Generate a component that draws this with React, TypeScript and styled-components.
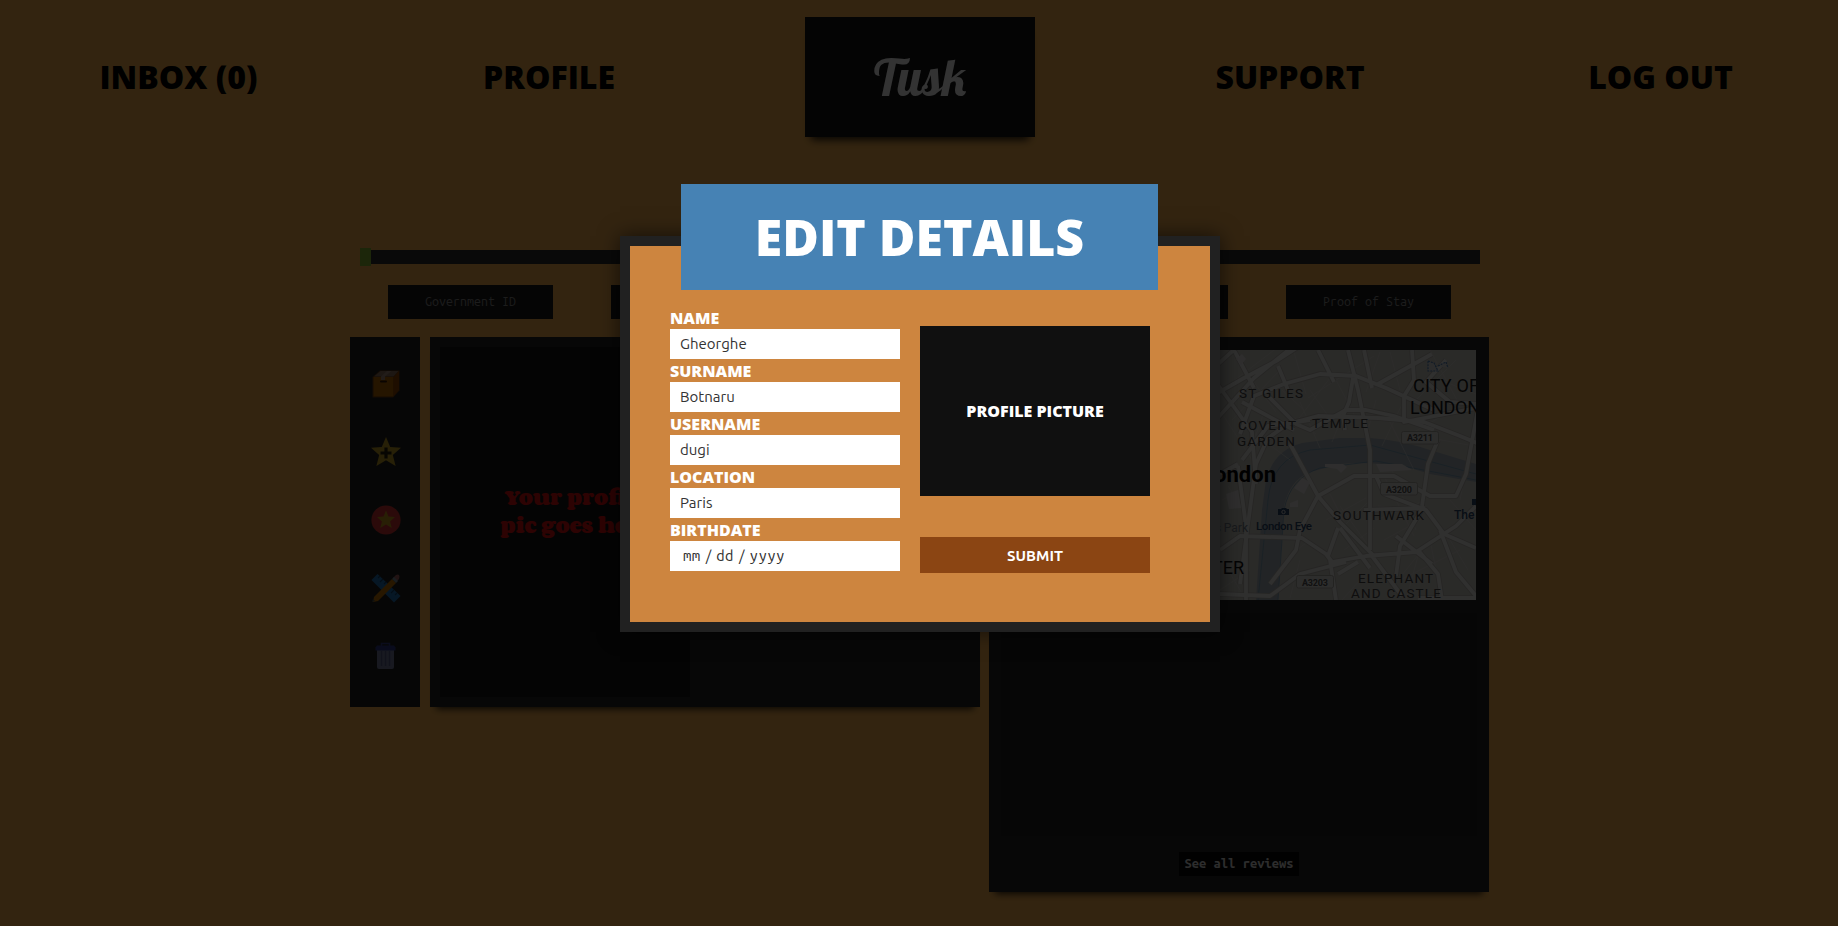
import React from 'react';
import styled, { createGlobalStyle } from 'styled-components';

const GlobalStyle = createGlobalStyle`
  * { box-sizing: border-box; }
  html, body { margin: 0; padding: 0; }
  body { background: #ffb650; font-family: 'Open Sans', 'Liberation Sans', sans-serif; overflow: hidden; }
`;

const Page = styled.div`
  position: relative;
  width: 1838px;
  height: 926px;
  overflow: hidden;
  background: #ffb650;
`;

const Nav = styled.nav`
  display: flex;
  justify-content: space-between;
  align-items: center;
  height: 154px;
  padding: 0 62px 0 64px;
`;

const NavLink = styled.a`
  width: 230px;
  padding-right: 1px;
  text-align: center;
  font-size: 32px;
  font-weight: 800;
  line-height: 44px;
  color: #000;
  white-space: nowrap;
`;

const Logo = styled.div`
  display: flex;
  align-items: center;
  justify-content: center;
  width: 230px;
  height: 120px;
  padding-top: 2px;
  background: #141414;
  box-shadow: 0 9px 8px -6px rgba(0, 0, 0, 0.85);
`;

const LogoText = styled.span`
  font-family: 'Lobster', 'Liberation Serif', serif;
  font-size: 50px;
  font-weight: 400;
  line-height: 60px;
  color: #fff;
`;

const Content = styled.main`
  display: flex;
  flex-direction: column;
  width: 1139px;
  margin: 94px 0 0 350px;
`;

const ProgressTrack = styled.div`
  display: flex;
  align-items: center;
  height: 18px;
  margin: 0 9px 0 10px;
`;

const ProgressDone = styled.div`
  width: 11px;
  height: 18px;
  background: #8cbe32;
`;

const ProgressRest = styled.div`
  flex: 1;
  height: 14px;
  background: #303030;
`;

const ProofRow = styled.div`
  display: flex;
  gap: 58px;
  margin: 19px 38px 18px 38px;
`;

const ProofButton = styled.button`
  flex: ${(p: { $wide?: boolean }) => (p.$wide ? '1' : '0 0 165px')};
  height: 34px;
  padding: 0 0 2px;
  border: 0;
  background: #1c1c1c;
  color: #8c8c8c;
  font-family: 'Ubuntu Mono', 'DejaVu Sans Mono', monospace;
  font-size: 12.5px;
`;

const Columns = styled.div`
  display: flex;
  align-items: flex-start;
`;

const Rail = styled.aside`
  display: flex;
  flex-direction: column;
  align-items: center;
  gap: 38px;
  width: 70px;
  height: 370px;
  margin-right: 10px;
  padding: 32px 0 0 1px;
  background: #222;
`;

const RailIcon = styled.svg`
  display: block;
  flex: none;
  width: 30px;
  height: 30px;
`;

const ProfilePanel = styled.section`
  width: 550px;
  height: 370px;
  padding: 10px;
  margin-right: 9px;
  background: #242424;
  box-shadow: 0 8px 7px -6px rgba(0, 0, 0, 0.8);
`;

const ProfilePlaceholder = styled.div`
  display: flex;
  align-items: center;
  width: 250px;
  height: 350px;
  padding: 0 0 23px 60px;
  background: #171717;
  color: #e01010;
  font-family: 'Cooper Black', 'Corben', 'Coustard', 'DejaVu Serif', serif;
  font-size: 18.4px;
  font-weight: 900;
  line-height: 28px;
  text-align: center;
  white-space: nowrap;
`;

const ReviewPanel = styled.section`
  display: flex;
  flex-direction: column;
  align-items: center;
  width: 500px;
  height: 555px;
  padding-top: 13px;
  background: #242424;
  box-shadow: 0 8px 7px -6px rgba(0, 0, 0, 0.8);
`;

const MapView = styled.svg`
  display: block;
  flex: none;
  width: 474px;
  height: 250px;
`;

const ReviewList = styled.div`
  width: 476px;
  height: 223px;
  margin-top: 13px;
  background: #1e1e1e;
`;

const ReviewButton = styled.button`
  width: 120px;
  height: 24px;
  margin-top: 16px;
  padding: 0 0 3px;
  border: 0;
  background: #050505;
  color: #dedede;
  font-family: 'Ubuntu Mono', 'DejaVu Sans Mono', monospace;
  font-size: 13px;
  font-weight: 700;
`;

const Overlay = styled.div`
  position: absolute;
  inset: 0;
  display: flex;
  justify-content: center;
  align-items: flex-start;
  padding: 236px 0 0 2px;
  background: rgba(0, 0, 0, 0.8);
`;

const Modal = styled.form`
  position: relative;
  display: flex;
  gap: 20px;
  width: 600px;
  height: 396px;
  padding: 62px 0 0 40px;
  border: 10px solid #212121;
  background: #cd853f;
  box-shadow: 0 0 20px rgba(0, 0, 0, 0.6);
`;

const ModalTitle = styled.h1`
  position: absolute;
  top: -62px;
  left: 51px;
  width: 477px;
  height: 106px;
  margin: 0;
  background: #4682b4;
  color: #fff;
  font-size: 50px;
  font-weight: 800;
  line-height: 106px;
  text-align: center;
  white-space: nowrap;
`;

const Fields = styled.div`
  width: 230px;
`;

const Field = styled.label`
  display: block;
  height: 53px;
`;

const FieldName = styled.span`
  display: block;
  height: 21px;
  color: #fff;
  font-size: 16px;
  font-weight: 800;
  line-height: 21px;
`;

const FieldInput = styled.input`
  display: block;
  width: 230px;
  height: 30px;
  padding: 0 10px 2px;
  border: 0;
  border-radius: 0;
  outline: 0;
  background: #fff;
  color: #333;
  font-family: 'Ubuntu', 'Noto Sans', sans-serif;
  font-size: 15px;
`;

const DateInput = styled.div`
  display: flex;
  align-items: center;
  width: 230px;
  height: 30px;
  padding: 0 13px 1px;
  background: #fff;
  color: #333;
  font-family: 'Ubuntu', 'Noto Sans', sans-serif;
  font-size: 15px;
`;

const DatePart = styled.span`
  font-family: 'Ubuntu Mono', 'DejaVu Sans Mono', monospace;
  letter-spacing: 0.4px;
`;

const DateSlash = styled.span`
  width: 15.7px;
  text-align: center;
`;

const Side = styled.div`
  width: 230px;
  padding-top: 18px;
`;

const Picture = styled.div`
  height: 170px;
  background: #101010;
  color: #fff;
  font-size: 16px;
  font-weight: 800;
  line-height: 171px;
  text-align: center;
`;

const Submit = styled.button`
  display: block;
  width: 230px;
  height: 36px;
  margin-top: 41px;
  padding: 0;
  border: 0;
  background: #8b4513;
  color: #fff;
  font-family: 'Ubuntu', 'Noto Sans', sans-serif;
  font-size: 15px;
  font-weight: 700;
`;

const MapLabel = styled.text`
  font-family: Roboto, sans-serif;
  font-size: ${(p: { $size?: number }) => p.$size || 13.5}px;
  font-weight: ${(p: { $weight?: number }) => p.$weight || 400};
`;

const star = '15,0 19.2,10 30,10.8 21.8,18 24.6,29 15,23.2 5.4,29 8.2,18 0,10.8 10.8,10';

function PackageIcon() {
  return (
    <RailIcon viewBox="0 0 30 30">
      <path d="M1.500 8 9 1.500h19.500v20l-6.500 7H1.500Z" fill="#6b3a10" />
      <path d="M2.500 8h20v19.500h-20Z" fill="#bb6c00" />
      <path d="m22.500 8 5.500-6v19l-5.500 6.500Z" fill="#964600" />
      <path d="m3 7.500 6.500-5.500h18l-5 5.500Z" fill="#8f7360" />
      <path d="m10 7.500 6-5.500h4.500l-6.500 5.500v3.500h-4Z" fill="#a98e7c" />
      <path d="M10 12.500h5" stroke="#351405" strokeWidth="2" strokeLinecap="round" />
    </RailIcon>
  );
}

function AddStarIcon() {
  return (
    <RailIcon viewBox="0 0 30 30">
      <polygon points={star} fill="#c29f24" />
      <path d="M15 10.500v11M9.500 16h11" stroke="#26220e" strokeWidth="3.200" />
    </RailIcon>
  );
}

function BadgeIcon() {
  return (
    <RailIcon viewBox="0 0 30 30">
      <circle cx="15" cy="15" r="14.600" fill="#d43432" />
      <polygon points={star} fill="#c99a1d" transform="translate(6 5.6) scale(.6)" />
    </RailIcon>
  );
}

function ToolsIcon() {
  return (
    <RailIcon viewBox="0 0 30 30">
      <path d="m6.500 1 23 22-6.500 6.500L.5 7Z" fill="#2275b8" />
      <path d="m9 3-2 2m5 1-3 3m6 0-2 2m7 3-2 2m5 1-3 3m6 0-2 2" stroke="#12426d" strokeWidth="1.200" />
      <path d="m3 24 18-18 4 4L7 28l-5 1Z" fill="#c27400" />
      <path d="m22 5 3-3q2-1 3 0t0 4l-3 3Z" fill="#a65e5e" />
      <path d="m21 6 2-2 4 4-2 2Z" fill="#7f909b" />
      <path d="m1 29 1-3 2 2Z" fill="#45504e" />
    </RailIcon>
  );
}

function TrashIcon() {
  return (
    <RailIcon viewBox="0 0 30 30">
      <path d="M10.500 5V2.500h8V5" fill="none" stroke="#343d8a" strokeWidth="1.500" />
      <path d="M6 8h17v18q0 2-2 2H8q-2 0-2-2Z" fill="#777c9f" />
      <path d="M10.500 10v15m4-15v15m4-15v15" stroke="#555b85" strokeWidth="1.300" />
      <path d="M6 4.500h17l1.500 2V9.500h-20v-3Z" fill="#303a8c" />
    </RailIcon>
  );
}

const minorRoads = [
  'M1210 372l46-40M1222 390l60-46M1230 350l46 62M1216 404l40 62M1232 420l50-52M1294 352l12 42M1308 398l66-42M1380 352l-14 40M1390 352l10 38',
  'M1290 430l40-52M1300 402l20 46M1310 390l28 40M1336 380l20 38M1354 386l-22 56M1376 400l-8 30M1416 400l40-40M1430 350l28 52M1440 380l36 14',
  'M1282 390l22 20M1270 400l46 34M1250 430l40 30M1264 412l-14 40M1400 440l70-40M1420 436l54 10M1384 410l30 60M1406 396l-24 50',
  'M1316 500l36-26M1330 494l30 60M1326 520l40-22M1340 506l30 42M1340 530l30-30M1384 476l30 60M1392 470l24 60M1376 520l50-20M1384 540l40-22M1378 506l44 4',
  'M1344 550l30-22M1360 580l-18 20M1300 560l-10 38M1310 540l-24 18M1418 556l-12 44M1430 540l12 60M1444 530l24 40M1470 450l-10 50M1450 500l26 30',
  'M1220 590l30-20M1222 560l24 40M1228 486l20 30M1222 500l22-12M1400 580l60-30M1390 590l40-50',
];

const majorRoads = [
  'M1216 366l22-20 24-14M1216 382l10 14 26 36 4 52M1214 422l40-44 42-34M1234 350l20 38M1278 366l10 24M1216 394l28-16 34-18 34-22',
  'M1240 434l14-38 30-12 36-10 36 2 30 12 48 22M1242 402l52 28M1318 350l16 32M1348 350l10 40 12 60v100M1364 350l8 38M1378 384l54-30M1412 350l2 30-10 16v26l72-14M1353 378l-4 24-6 14 2 14',
  'M1268 396l28 28 14 6 36-20h20l28 6 40 14M1310 420l-42 6-26 34M1446 360l-20 22 24 20 26 2',
  'M1240 584l16-120 12-26 20-14 30-8 60 2 46 4 36 14 24 10M1290 444l28 52 22 26 34 34M1318 496l-18 34-4 20-26 34M1318 496l36-20h40l36 20h26l10-22 14-76M1376 476l8 18 42 16 18 24 32 14',
  'M1220 474l18-10M1220 550l20-14 62 2 24 16 6 8 34-6 50-4 40-26 20-20M1238 466l8 60v74M1328 556l10-28M1330 560l6 40M1340 528l30 40M1424 506l-24 40-4 30M1396 536l36 28M1372 556l30 40M1440 530l16 42 20 24M1220 594l50 2 30-22 46-12M1418 598h58M1418 550l20 24 4 26',
  'M1438 440l-10 24-6 42M1364 510l60-2M1338 574l20-12',
];

function LondonMap() {
  return (
    <MapView viewBox="1002 350 474 250">
      <rect x="1002" y="350" width="474" height="250" fill="#d2cfc8" />
      <path d="M1256 600 1262 510 1266 480Q1274 450 1302 443L1340 438 1370 438Q1400 440 1430 450L1476 464V482L1430 474Q1390 460 1340 464L1310 472Q1290 480 1284 506L1278 600Z" fill="#a9b5bd" />
      <path d="M1258 600 1268 500Q1272 458 1310 450L1370 445 1476 474M1278 600 1284 510Q1290 478 1320 468L1376 461 1476 480" fill="none" stroke="#6f9cba" strokeWidth=".7" />
      <g fill="none" stroke="#e4e2dc" strokeWidth="1" opacity=".6">
        {minorRoads.map((d) => <path key={d} d={d} />)}
      </g>
      <g fill="none" strokeLinejoin="round">
        {majorRoads.map((d) => <path key={d} d={d} stroke="#bcb9b2" strokeWidth="5.500" />)}
        {majorRoads.map((d) => <path key={d} d={d} stroke="#efeeec" strokeWidth="3.800" />)}
      </g>
      <g fill="#e8e7e4">
        <path d="m1226 494 12-4 3 18-12 1ZM1294 488l8-10 8 4-6 12ZM1376 464h26l10 6-32 2ZM1325 464h18l4 3-6 6-4-4-12-2ZM1236 359l6-5 4 5-5 6ZM1290 503l8-3v7h-8Z" />
      </g>
      <path d="m1428 361 6 2 4 8h-10ZM1438 366l8-4 2 6" fill="#ddd" stroke="#5785bb" strokeWidth="1.200" strokeDasharray="2 1" />
      <g fill="#484848">
        <MapLabel x="1239" y="398" textLength="64">ST GILES</MapLabel>
        <MapLabel x="1238" y="430" textLength="58">COVENT</MapLabel>
        <MapLabel x="1237" y="446" textLength="58">GARDEN</MapLabel>
        <MapLabel x="1312" y="428" textLength="56">TEMPLE</MapLabel>
        <MapLabel x="1333" y="520" textLength="91">SOUTHWARK</MapLabel>
        <MapLabel x="1358" y="582.500" textLength="75">ELEPHANT</MapLabel>
        <MapLabel x="1351" y="598" textLength="90">AND CASTLE</MapLabel>
      </g>
      <g fill="#181818">
        <MapLabel x="1413" y="392" $size={18} textLength="66">CITY OF</MapLabel>
        <MapLabel x="1410" y="413.500" $size={18} textLength="70">LONDON</MapLabel>
        <MapLabel x="1253" y="574" $size={18} textAnchor="end" dx="-9">WESTMINSTER</MapLabel>
      </g>
      <MapLabel x="1276" y="482" $size={22} $weight={700} fill="#080808" textAnchor="end">London</MapLabel>
      <MapLabel x="1248" y="532" $size={12} fill="#77828c" textAnchor="end">St James's Park</MapLabel>
      <g fill="#2b4669">
        <MapLabel x="1256" y="529.500" $size={11.5} $weight={500} textLength="56">London Eye</MapLabel>
        <MapLabel x="1454" y="519" $size={12} $weight={500}>The Shard</MapLabel>
        <path d="M1278 509h3l1-1h4l1 1h2v6h-11ZM1472 499h4v6h-4Z" />
      </g>
      <circle cx="1283.500" cy="512" r="1.700" fill="none" stroke="#ddd" />
      <g fill="#e2e1dd" stroke="#b0ada7">
        <rect x="1401.500" y="431.500" width="37" height="12.500" rx="2" />
        <rect x="1380.500" y="482.500" width="37" height="12.500" rx="2" />
        <rect x="1296.500" y="575.500" width="37" height="12.500" rx="2" />
      </g>
      <g fill="#555">
        <MapLabel x="1407" y="441" $size={9} $weight={700} textLength="26">A3211</MapLabel>
        <MapLabel x="1386" y="492.500" $size={9} $weight={700} textLength="26">A3200</MapLabel>
        <MapLabel x="1302" y="585.500" $size={9} $weight={700} textLength="26">A3203</MapLabel>
      </g>
    </MapView>
  );
}

const fields = [
  { name: 'NAME', value: 'Gheorghe' },
  { name: 'SURNAME', value: 'Botnaru' },
  { name: 'USERNAME', value: 'dugi' },
  { name: 'LOCATION', value: 'Paris' },
];

export default function App() {
  return (
    <Page>
      <GlobalStyle />
      <Nav>
        <NavLink>INBOX (0)</NavLink>
        <NavLink>PROFILE</NavLink>
        <Logo><LogoText>Tusk</LogoText></Logo>
        <NavLink>SUPPORT</NavLink>
        <NavLink>LOG OUT</NavLink>
      </Nav>
      <Content>
        <ProgressTrack>
          <ProgressDone />
          <ProgressRest />
        </ProgressTrack>
        <ProofRow>
          <ProofButton>Government ID</ProofButton>
          <ProofButton />
          <ProofButton $wide />
          <ProofButton />
          <ProofButton>Proof of Stay</ProofButton>
        </ProofRow>
        <Columns>
          <Rail>
            <PackageIcon />
            <AddStarIcon />
            <BadgeIcon />
            <ToolsIcon />
            <TrashIcon />
          </Rail>
          <ProfilePanel>
            <ProfilePlaceholder>Your profile<br />pic goes here</ProfilePlaceholder>
          </ProfilePanel>
          <ReviewPanel>
            <LondonMap />
            <ReviewList />
            <ReviewButton>See all reviews</ReviewButton>
          </ReviewPanel>
        </Columns>
      </Content>
      <Overlay>
        <Modal>
          <ModalTitle>EDIT DETAILS</ModalTitle>
          <Fields>
            {fields.map((f) => (
              <Field key={f.name}>
                <FieldName>{f.name}</FieldName>
                <FieldInput defaultValue={f.value} />
              </Field>
            ))}
            <Field>
              <FieldName>BIRTHDATE</FieldName>
              <DateInput>
                <DatePart>mm</DatePart>
                <DateSlash>/</DateSlash>
                <DatePart>dd</DatePart>
                <DateSlash>/</DateSlash>
                <DatePart>yyyy</DatePart>
              </DateInput>
            </Field>
          </Fields>
          <Side>
            <Picture>PROFILE PICTURE</Picture>
            <Submit type="button">SUBMIT</Submit>
          </Side>
        </Modal>
      </Overlay>
    </Page>
  );
}
